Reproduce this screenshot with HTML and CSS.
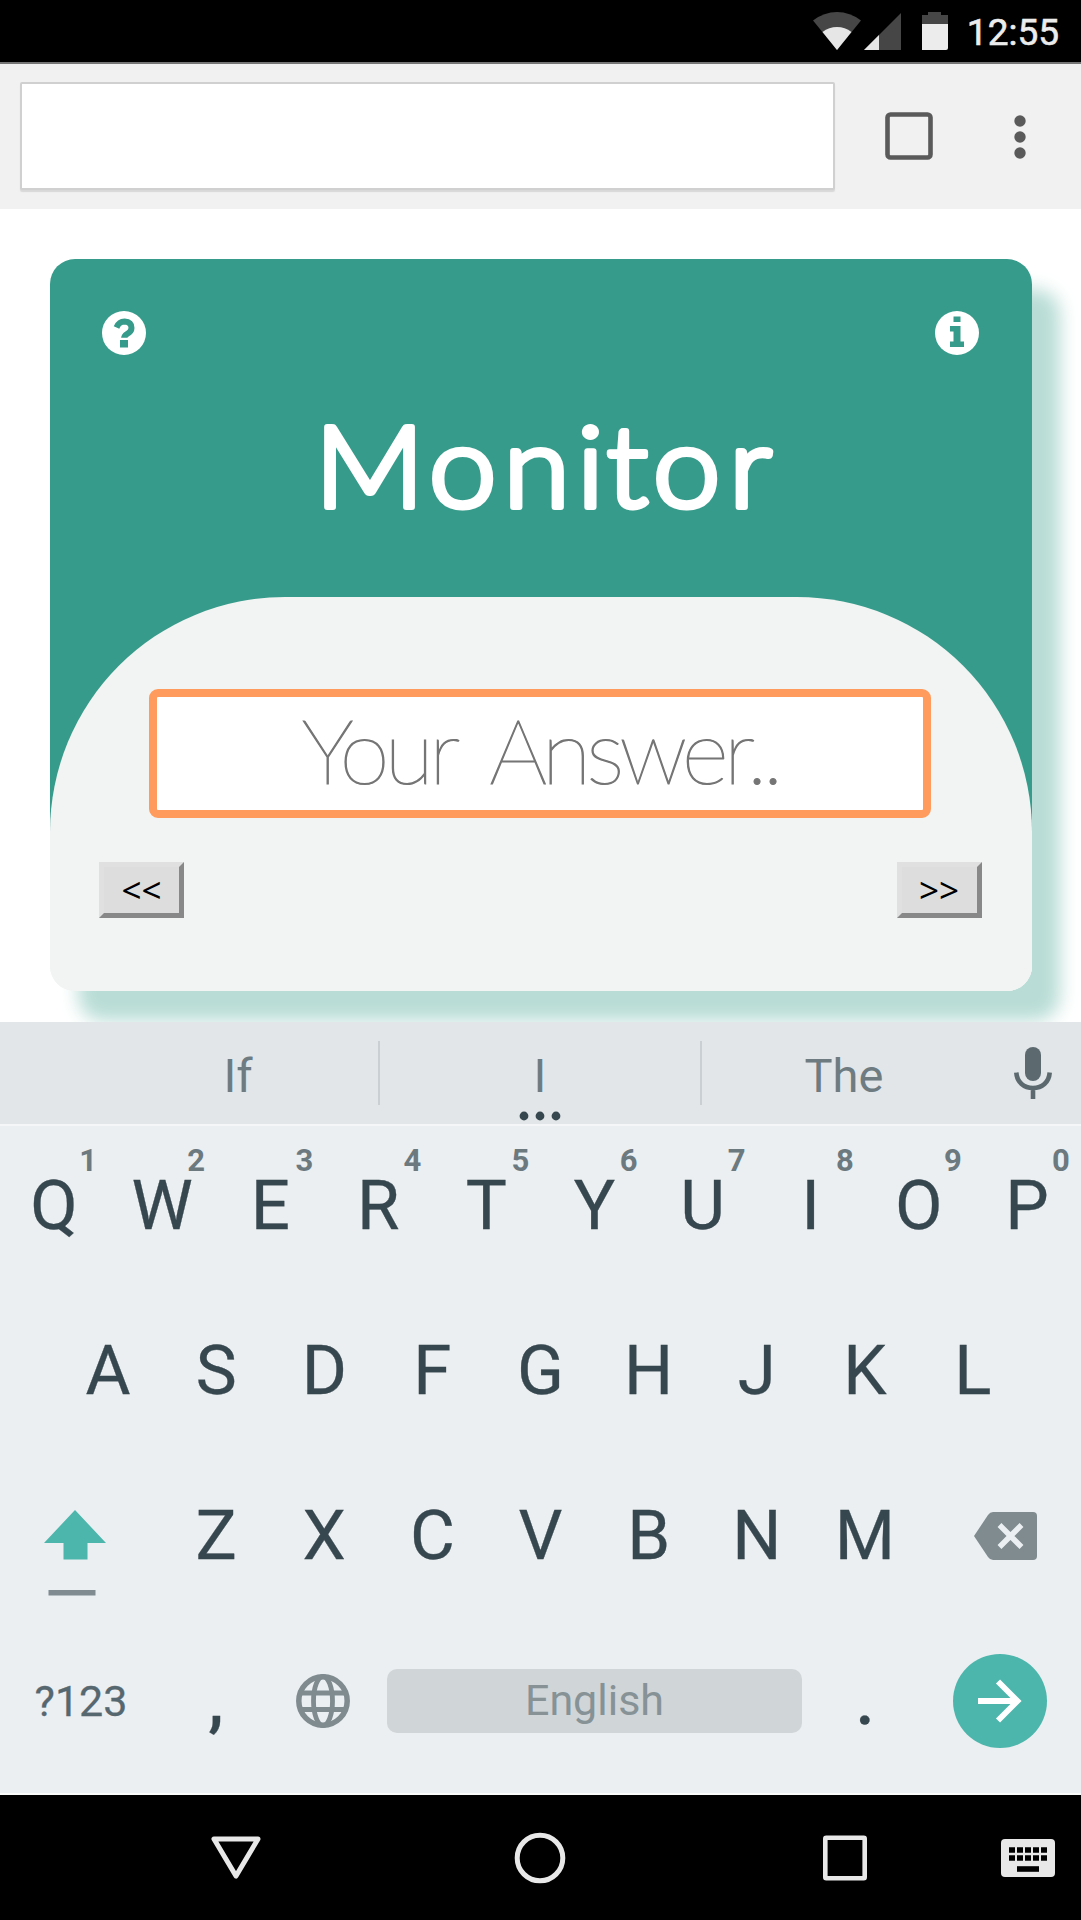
FILE: index.html
```html
<!DOCTYPE html>
<html lang="en">
<head>
<meta charset="utf-8">
<title>Monitor</title>
<link rel="stylesheet" href="styles.css">
</head>
<body>
<div class="phone">
  <header class="status">
    <svg class="wifi" width="48" height="38" viewBox="0 0 48 38"><path d="M24 38 0 8.500Q11 0 24 0T48 8.500Z" fill="#464646"/><path d="M24 38 9.500 20Q16 15 24 15T38.500 20Z" fill="#e6e6e6"/></svg>
    <svg class="signal" width="37" height="37" viewBox="0 0 37 37"><path d="M0 37 37 0V37Z" fill="#464646"/><path d="M0 37 15 22V37Z" fill="#e6e6e6"/></svg>
    <svg class="battery" width="26" height="38" viewBox="0 0 26 38"><path d="M6 0H19V3H26V12H0V3H6Z" fill="#464646"/><path d="M0 12H26V36Q26 38 24 38H0Z" fill="#ececec"/></svg>
    <span class="clock">12:55</span>
  </header>
  <div class="toolbar">
    <div class="address"></div>
    <svg class="tabs" width="48" height="48" viewBox="0 0 48 48"><rect x="2.500" y="2.500" width="43" height="43" rx="3" fill="none" stroke="#5a5a5a" stroke-width="4.600"/></svg>
    <svg class="more" width="12" height="44" viewBox="0 0 12 44" fill="#5a5a5a"><circle cx="6" cy="6" r="5.700"/><circle cx="6" cy="22" r="5.700"/><circle cx="6" cy="38" r="5.700"/></svg>
  </div>
  <main class="page">
    <section class="card">
      <div class="card-head">
        <div class="card-icons">
          <svg width="44" height="44" viewBox="0 0 44 44"><circle cx="22" cy="22" r="22" fill="#fff"/><path d="M14.500 16.500Q17 10.500 22.500 10.500Q29.500 11 29.500 17Q29.500 20.500 25 23Q22 25 22 28" fill="none" stroke="#369b8a" stroke-width="6"/><path d="M18 29H26V36.500H18Z" fill="#369b8a"/><path d="M18 26.800H26V29H18Z" fill="#fff"/></svg>
          <svg width="44" height="44" viewBox="0 0 44 44"><circle cx="22" cy="22" r="22" fill="#fff"/><path d="M18.500 5.500H25.500V11H18.500ZM15 15H25.500V30.500H29V36H15V30.500H18.500V20.500H15Z" fill="#369b8a"/></svg>
        </div>
        <h1 class="title"><svg width="470" height="130" viewBox="0 0 440 130" preserveAspectRatio="none"><text class="title-text" x="2.500 109.500 179.300 248 276 319.300 390.400" y="106">Monitor</text></svg></h1>
      </div>
      <div class="panel">
        <input class="answer" type="text" placeholder="Your Answer..">
        <div class="pager">
          <button class="step">&lt;&lt;</button>
          <button class="step">&gt;&gt;</button>
        </div>
      </div>
    </section>
  </main>
  <section class="keyboard">
    <div class="suggest">
      <span class="word">If</span>
      <i class="sep"></i>
      <span class="word">I<svg class="dots" width="42" height="10" viewBox="0 0 42 10" fill="#37474f"><circle cx="5" cy="5" r="4.400"/><circle cx="21" cy="5" r="4.400"/><circle cx="37" cy="5" r="4.400"/></svg></span>
      <i class="sep"></i>
      <span class="word">The</span>
      <svg class="mic" width="38" height="52" viewBox="0 0 38 52"><rect x="11" y="0" width="16" height="34" rx="8" fill="#5c6a70"/><path d="M2.300 25.500C3 35.500 10 41 19 41S35 35.500 35.700 25.500M19 41V52" fill="none" stroke="#5c6a70" stroke-width="4.600"/></svg>
    </div>
    <div class="keys">
      <div class="row">
        <span class="key">Q<sup>1</sup></span><span class="key">W<sup>2</sup></span><span class="key">E<sup>3</sup></span><span class="key">R<sup>4</sup></span><span class="key">T<sup>5</sup></span><span class="key">Y<sup>6</sup></span><span class="key">U<sup>7</sup></span><span class="key">I<sup>8</sup></span><span class="key">O<sup>9</sup></span><span class="key">P<sup>0</sup></span>
      </div>
      <div class="row row-home">
        <span class="key">A</span><span class="key">S</span><span class="key">D</span><span class="key">F</span><span class="key">G</span><span class="key">H</span><span class="key">J</span><span class="key">K</span><span class="key">L</span>
      </div>
      <div class="row row-shift">
        <span class="key shift"><svg width="62" height="88" viewBox="0 0 62 88"><path d="M31 0 62 33H43.500V49.500H19.500V33H0Z" fill="#4db6ac"/><path d="M4.500 80H51.500V85.500H4.500Z" fill="#7f8b90"/></svg></span>
        <span class="key">Z</span><span class="key">X</span><span class="key">C</span><span class="key">V</span><span class="key">B</span><span class="key">N</span><span class="key">M</span>
        <span class="key erase"><svg width="63" height="48" viewBox="0 0 63 48"><path d="M0 24 14 3Q16 0 19 0H59Q63 0 63 4V44Q63 48 59 48H19Q16 48 14 45Z" fill="#7f8b8f"/><path d="M25.500 13 47.500 35M47.500 13 25.500 35" stroke="#ebeff2" stroke-width="5.500"/></svg></span>
      </div>
      <div class="row row-space">
        <span class="key small">?123</span>
        <span class="key mark">,</span>
        <span class="key globe"><svg width="54" height="54" viewBox="0 0 54 54" fill="none" stroke="#7f8b8f" stroke-width="5.500"><circle cx="27" cy="27" r="24.200"/><path d="M4 19H50M4 35.500H50" stroke-width="4.800"/><ellipse cx="27" cy="27" rx="9.500" ry="24.500" stroke-width="4.800"/></svg></span>
        <span class="space">English</span>
        <span class="key mark">.</span>
        <span class="key"><svg width="94" height="96" viewBox="0 0 94 96"><circle cx="47" cy="48" r="47" fill="#4db6ac"/><path d="M25 48H65M45 28.500 64.500 48 45 67.500" fill="none" stroke="#fff" stroke-width="5.800"/></svg></span>
      </div>
    </div>
  </section>
  <nav class="navbar">
    <svg class="back" width="50" height="43" viewBox="0 0 50 43"><path d="M3 3H47L25 40Z" fill="none" stroke="#e8e8e8" stroke-width="5" stroke-linejoin="round"/></svg>
    <svg class="home" width="52" height="52" viewBox="0 0 52 52"><circle cx="26" cy="26" r="22.800" fill="none" stroke="#e8e8e8" stroke-width="5"/></svg>
    <svg class="recent" width="44" height="46" viewBox="0 0 44 46"><rect x="2.300" y="2.800" width="39.400" height="40.400" rx="1" fill="none" stroke="#e8e8e8" stroke-width="4.600"/></svg>
    <svg class="ime" width="54" height="38" viewBox="0 0 54 38"><rect width="54" height="38" rx="4" fill="#e8e8e8"/><path d="M8 11H46M8 19H46" stroke="#000" stroke-width="5.600" stroke-dasharray="6 2"/><path d="M16 30H38" stroke="#000" stroke-width="5.600"/></svg>
  </nav>
</div>
</body>
</html>
```
FILE: styles.css
```css
* { box-sizing: border-box; }
body { margin: 0; background: #fff; font-family: Roboto, "Liberation Sans", sans-serif; }
svg { display: block; flex: none; }
.phone { width: 1081px; height: 1920px; display: flex; flex-direction: column; overflow: hidden; }

.status { height: 64px; flex: none; background: #000; border-bottom: 2px solid #757575; display: flex; align-items: center; justify-content: flex-end; padding-right: 22px; }
.signal { margin-left: 3px; }
.battery { margin-left: 21px; }
.clock { margin-left: 19px; margin-top: 4px; color: #ececec; font-size: 37px; line-height: 44px; -webkit-text-stroke: 0.600px #ececec; }

.toolbar { height: 145px; flex: none; background: #f1f1f1; display: flex; align-items: flex-start; padding-left: 20px; }
.address { width: 815px; height: 108px; margin-top: 18px; background: #fff; border: 2px solid #d0d0d0; border-radius: 2px; box-shadow: 0 2px 1px #d8d8d8; }
.tabs { margin: 48px 0 0 50px; }
.more { margin: 51px 0 0 81px; }

.page { height: 813px; flex: none; padding: 50px 49.500px 0 50px; overflow: hidden; }
.card { height: 732px; border-radius: 25px; background: linear-gradient(#369b8a 620px, #f1f4f3 620px); box-shadow: 28px 30px 18px #b9ddd6; display: flex; flex-direction: column; overflow: hidden; }
.card-head { height: 338px; padding: 52px 53px 0 52px; }
.card-icons { display: flex; justify-content: space-between; }
.title { margin: 46px 0 0 210px; }
.title-text { font: 300 113px Lato, sans-serif; fill: #fff; stroke: #fff; stroke-width: 6px; stroke-linejoin: round; }
.panel { flex: 1; background: #f1f4f3; border-radius: 235px 235px 0 0; padding: 92px 50px 0 49px; display: flex; flex-direction: column; }
.answer { width: 782px; height: 129px; margin: 0 auto; padding: 0 0 10px; text-align: center; border: 8px solid #ff9b5c; border-radius: 9px; background: #fff; font: 100 91px/103px Lato, sans-serif; letter-spacing: -5px; outline: none; }
.answer::placeholder { color: #757575; opacity: 1; word-spacing: 18px; -webkit-text-stroke: 1.200px #757575; }
.pager { display: flex; justify-content: space-between; margin-top: 44px; }
.step { width: 85px; height: 56px; padding: 0; background: #ddd; border: 5px solid; border-color: #e0e0e0 #888 #888 #e0e0e0; color: #000; font: 400 35px/42px "Noto Sans", sans-serif; }

.keyboard { height: 773px; flex: none; background: #ebeff2; border-bottom: 2px solid #fafcfc; }
.suggest { height: 104px; background: #e2e6e9; border-bottom: 2px solid #f4f6f7; display: grid; grid-template-columns: 280px 2px 320px 2px 284px 1fr; align-items: center; padding-left: 98px; }
.word { position: relative; text-align: center; font-size: 47px; line-height: 102px; height: 102px; padding-top: 3px; color: #6e7c82; }
.sep { height: 64px; background: #c9cfd2; }
.dots { position: absolute; left: 50%; bottom: 3px; margin-left: -21px; }
.mic { justify-self: center; margin-right: 1px; }

.keys { display: grid; grid-template-rows: 160px 170px 160px 170px; }
.row { display: grid; grid-template-columns: repeat(10, 1fr); }
.row-home { grid-template-columns: repeat(9, 1fr); padding: 0 54px; }
.row-shift { grid-template-columns: 162px repeat(7, 1fr) 162px; }
.row-space { grid-template-columns: 162px 108px 108px 1fr 108px 162px; align-items: center; }
.key { position: relative; display: flex; align-items: center; justify-content: center; color: #37474f; font-size: 69px; line-height: 80px; -webkit-text-stroke: 0.300px currentColor; }
.key sup { position: absolute; right: 10px; top: 15px; width: 20px; text-align: center; font-size: 31px; font-weight: 700; line-height: 40px; color: #6c797f; -webkit-text-stroke: 0; }
.shift { align-items: flex-start; padding: 54px 12px 0 0; }
.erase { padding-right: 0; padding-left: 10px; }
.small { font-size: 43px; color: #56676f; }
.mark { font-weight: 500; }
.globe { padding-right: 2px; }
.space { height: 64px; margin: 0 9px; border-radius: 10px; background: #d0d5d8; color: #869296; font-size: 43px; line-height: 62px; text-align: center; }

.navbar { flex: 1; background: #000; display: flex; align-items: center; padding-left: 211px; }
.home { margin-left: 253px; }
.recent { margin-left: 257px; }
.ime { margin-left: 134px; }
```
